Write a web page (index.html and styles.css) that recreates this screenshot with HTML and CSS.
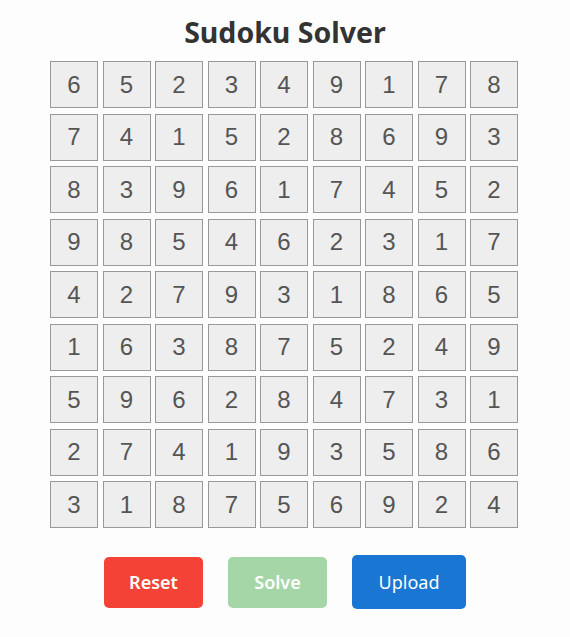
FILE: index.html
```html
<!DOCTYPE html>
<html>
<head>
<meta charset="utf-8">
<link rel="stylesheet" href="styles.css">
</head>
<body>
<div class="app">
  <h1 class="title">Sudoku Solver</h1>
  <div class="board">
    <div class="cell">6</div><div class="cell">5</div><div class="cell">2</div><div class="cell">3</div><div class="cell">4</div><div class="cell">9</div><div class="cell">1</div><div class="cell">7</div><div class="cell">8</div>
    <div class="cell">7</div><div class="cell">4</div><div class="cell">1</div><div class="cell">5</div><div class="cell">2</div><div class="cell">8</div><div class="cell">6</div><div class="cell">9</div><div class="cell">3</div>
    <div class="cell">8</div><div class="cell">3</div><div class="cell">9</div><div class="cell">6</div><div class="cell">1</div><div class="cell">7</div><div class="cell">4</div><div class="cell">5</div><div class="cell">2</div>
    <div class="cell">9</div><div class="cell">8</div><div class="cell">5</div><div class="cell">4</div><div class="cell">6</div><div class="cell">2</div><div class="cell">3</div><div class="cell">1</div><div class="cell">7</div>
    <div class="cell">4</div><div class="cell">2</div><div class="cell">7</div><div class="cell">9</div><div class="cell">3</div><div class="cell">1</div><div class="cell">8</div><div class="cell">6</div><div class="cell">5</div>
    <div class="cell">1</div><div class="cell">6</div><div class="cell">3</div><div class="cell">8</div><div class="cell">7</div><div class="cell">5</div><div class="cell">2</div><div class="cell">4</div><div class="cell">9</div>
    <div class="cell">5</div><div class="cell">9</div><div class="cell">6</div><div class="cell">2</div><div class="cell">8</div><div class="cell">4</div><div class="cell">7</div><div class="cell">3</div><div class="cell">1</div>
    <div class="cell">2</div><div class="cell">7</div><div class="cell">4</div><div class="cell">1</div><div class="cell">9</div><div class="cell">3</div><div class="cell">5</div><div class="cell">8</div><div class="cell">6</div>
    <div class="cell">3</div><div class="cell">1</div><div class="cell">8</div><div class="cell">7</div><div class="cell">5</div><div class="cell">6</div><div class="cell">9</div><div class="cell">2</div><div class="cell">4</div>
  </div>
  <div class="actions">
    <button class="btn btn-reset">Reset</button>
    <button class="btn btn-solve">Solve</button>
    <label class="btn btn-upload">Upload</label>
  </div>
</div>
</body>
</html>
```
FILE: styles.css
```css
html, body {
  margin: 0;
  padding: 0;
  background: #fdfdfd;
}
.app {
  display: flex;
  flex-direction: column;
  align-items: center;
  padding-top: 13px;
}
.title {
  margin: 0 0 9px 0;
  font-family: "Noto Sans", "Open Sans", sans-serif;
  font-weight: 700;
  font-size: 28.5px;
  line-height: 39px;
  color: #333;
}
.board {
  display: grid;
  grid-template-columns: repeat(9, 48px);
  grid-auto-rows: 47px;
  column-gap: 4.5px;
  row-gap: 5.5px;
  margin-left: -2px;
}
.cell {
  box-sizing: border-box;
  border: 1px solid #999;
  background: #eee;
  display: flex;
  align-items: center;
  justify-content: center;
  font-family: "Liberation Sans", Arial, sans-serif;
  font-size: 24px;
  color: #555;
}
.actions {
  display: flex;
  align-items: center;
  gap: 25px;
  margin-top: 27px;
}
.btn {
  box-sizing: border-box;
  border: none;
  border-radius: 5px;
  color: #fff;
  font-family: "Noto Sans", "Open Sans", sans-serif;
  font-size: 18px;
  display: flex;
  align-items: center;
  justify-content: center;
  padding: 0;
}
.btn-reset {
  width: 99px;
  height: 51px;
  background: #f44336;
  font-weight: 600;
}
.btn-solve {
  width: 99px;
  height: 51px;
  background: #a5d6a7;
  font-weight: 600;
}
.btn-upload {
  width: 114px;
  height: 54px;
  background: #1976d2;
  font-weight: 400;
}
```
